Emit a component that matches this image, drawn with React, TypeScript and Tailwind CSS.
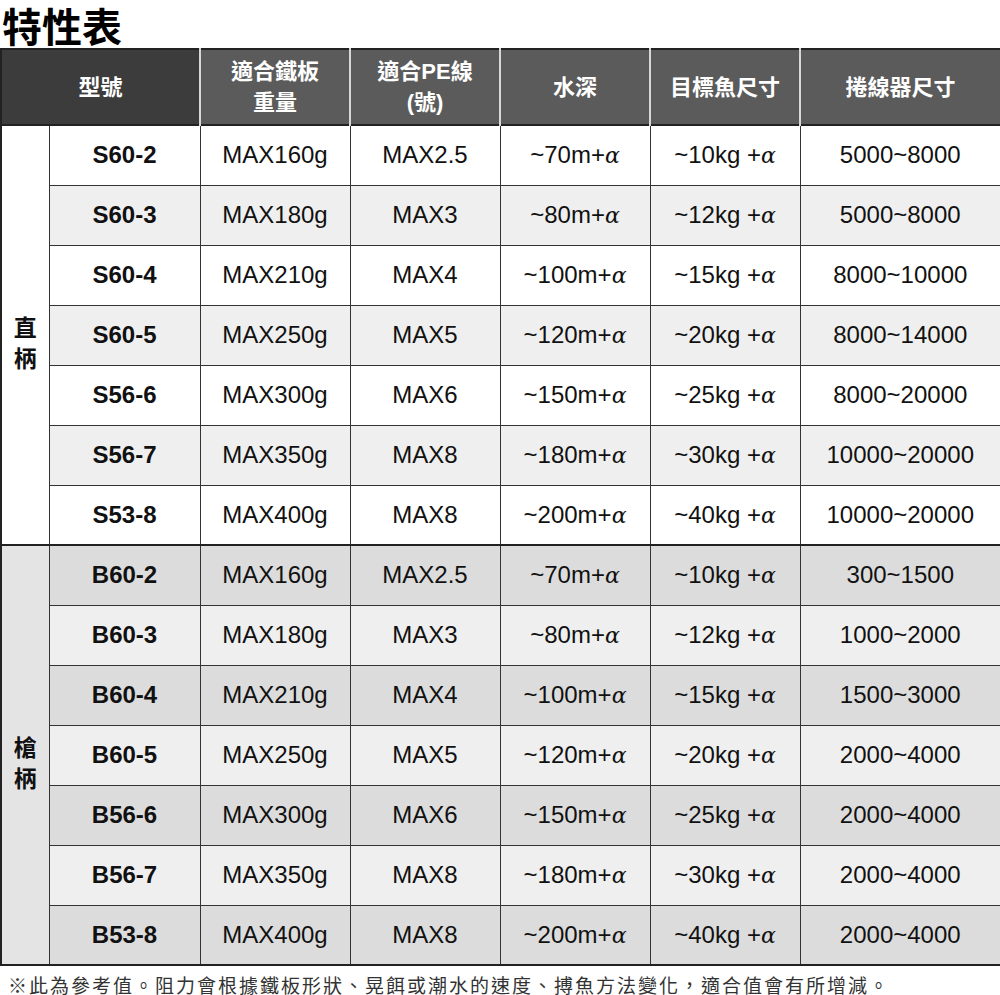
import React from "react";

type Row = [string, string, string, string, string, string];

const g1: Row[] = [
  ["S60-2", "MAX160g", "MAX2.5", "~70m+", "~10kg +", "5000~8000"],
  ["S60-3", "MAX180g", "MAX3", "~80m+", "~12kg +", "5000~8000"],
  ["S60-4", "MAX210g", "MAX4", "~100m+", "~15kg +", "8000~10000"],
  ["S60-5", "MAX250g", "MAX5", "~120m+", "~20kg +", "8000~14000"],
  ["S56-6", "MAX300g", "MAX6", "~150m+", "~25kg +", "8000~20000"],
  ["S56-7", "MAX350g", "MAX8", "~180m+", "~30kg +", "10000~20000"],
  ["S53-8", "MAX400g", "MAX8", "~200m+", "~40kg +", "10000~20000"],
];
const g2: Row[] = [
  ["B60-2", "MAX160g", "MAX2.5", "~70m+", "~10kg +", "300~1500"],
  ["B60-3", "MAX180g", "MAX3", "~80m+", "~12kg +", "1000~2000"],
  ["B60-4", "MAX210g", "MAX4", "~100m+", "~15kg +", "1500~3000"],
  ["B60-5", "MAX250g", "MAX5", "~120m+", "~20kg +", "2000~4000"],
  ["B56-6", "MAX300g", "MAX6", "~150m+", "~25kg +", "2000~4000"],
  ["B56-7", "MAX350g", "MAX8", "~180m+", "~30kg +", "2000~4000"],
  ["B53-8", "MAX400g", "MAX8", "~200m+", "~40kg +", "2000~4000"],
];

const Alpha = () => <span className="italic font-['DejaVu_Serif',serif] text-[22px]">α</span>;

function Cells({ r }: { r: Row }) {
  const td = "border border-[#333] text-center align-middle p-0";
  return (
    <>
      <td className={td + " font-bold"}>{r[0]}</td>
      <td className={td}>{r[1]}</td>
      <td className={td}>{r[2]}</td>
      <td className={td}>
        {r[3]}
        <Alpha />
      </td>
      <td className={td}>
        {r[4]}
        <Alpha />
      </td>
      <td className={td}>{r[5]}</td>
    </>
  );
}

function Label({ a, b }: { a: string; b: string }) {
  return (
    <div className="flex flex-col items-center pt-[14px] font-bold font-['Noto_Sans_CJK_TC',sans-serif] text-[23px] leading-[31px]">
      <span>{a}</span>
      <span>{b}</span>
    </div>
  );
}

export default function App() {
  const th = "border-x-2 border-[#d8d8d8] bg-[#5b5b5b] text-white font-bold text-[22px] leading-[31px] text-center align-middle p-0";
  return (
    <div className="w-[1000px] h-[995px] bg-white font-['Liberation_Sans','Noto_Sans_CJK_TC',sans-serif] text-[#111]">
      <h1 className="h-[48px] pl-[2px] pt-[2px] text-[40px] leading-[46px] font-bold font-['Noto_Sans_CJK_TC',sans-serif] text-black">特性表</h1>
      <table className="table-fixed border-collapse border-2 border-[#222] w-[1000px] text-[24px]">
        <colgroup>
          <col className="w-[48px]" />
          <col className="w-[151px]" />
          <col className="w-[150px]" />
          <col className="w-[150px]" />
          <col className="w-[150px]" />
          <col className="w-[150px]" />
          <col className="w-[201px]" />
        </colgroup>
        <thead>
          <tr className="h-[76px] border-b-2 border-[#222]">
            <th colSpan={2} className={th.replace("bg-[#5b5b5b]", "bg-[#3c3c3c]") + " border-l-0"}>型號</th>
            <th className={th}>適合鐵板<br />重量</th>
            <th className={th}>適合PE線<br />(號)</th>
            <th className={th}>水深</th>
            <th className={th}>目標魚尺寸</th>
            <th className={th + " border-r-0"}>捲線器尺寸</th>
          </tr>
        </thead>
        <tbody>
          {g1.map((r, i) => (
            <tr key={r[0]} className={"h-[60px] " + (i % 2 ? "bg-[#efefef]" : "bg-white")}>
              {i === 0 && (
                <td rowSpan={7} className="border border-[#333] bg-white align-middle p-0">
                  <Label a="直" b="柄" />
                </td>
              )}
              <Cells r={r} />
            </tr>
          ))}
          {g2.map((r, i) => (
            <tr key={r[0]} className={"h-[60px] " + (i % 2 ? "bg-[#efefef]" : "bg-[#dcdcdc]") + (i === 0 ? " border-t-2 border-[#222]" : "")}>
              {i === 0 && (
                <td rowSpan={7} className="border border-[#333] bg-[#e4e4e4] align-middle p-0">
                  <Label a="槍" b="柄" />
                </td>
              )}
              <Cells r={r} />
            </tr>
          ))}
        </tbody>
      </table>
      <p className="mt-[7px] pl-[8px] text-[19px] leading-[24px] tracking-[2px] text-[#333] font-['Noto_Sans_CJK_TC',sans-serif]">
        ※此為參考值。阻力會根據鐵板形狀、晃餌或潮水的速度、搏魚方法變化，適合值會有所增減。
      </p>
    </div>
  );
}
